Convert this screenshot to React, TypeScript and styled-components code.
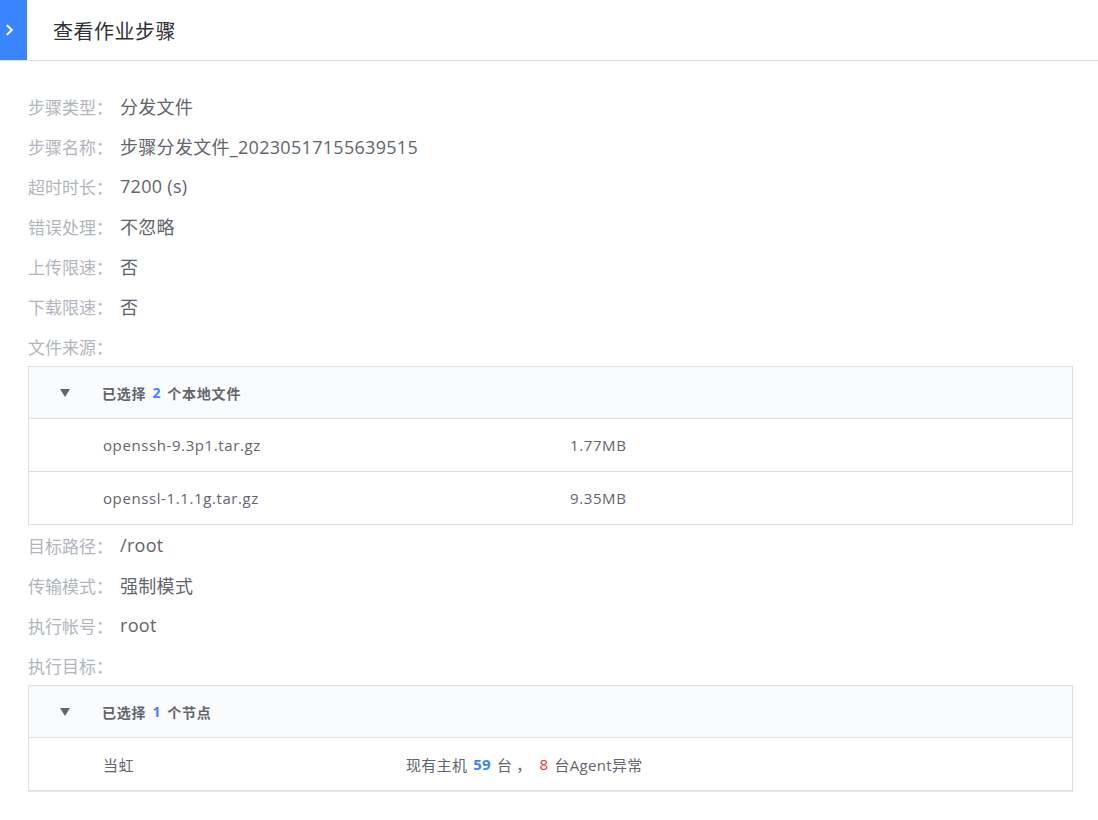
import React from "react";
import styled, { createGlobalStyle } from "styled-components";

const GlobalStyle = createGlobalStyle`
  html, body {
    margin: 0;
    padding: 0;
    background: #fff;
    font-family: "Open Sans", "Noto Sans CJK SC", sans-serif;
  }
`;

const Page = styled.div`
  width: 1098px;
  min-height: 820px;
  background: #fff;
`;

const Header = styled.header`
  display: flex;
  align-items: center;
  height: 60px;
  border-bottom: 1px solid #dcdee5;
`;

const ToggleTab = styled.div`
  display: flex;
  align-items: center;
  width: 27px;
  height: 60px;
  padding-left: 4px;
  box-sizing: border-box;
  background: #3a84ff;
`;

const Title = styled.h1`
  margin: 0 0 0 26px;
  font-size: 20px;
  font-weight: 400;
  color: #313238;
  letter-spacing: 0.5px;
`;

const Content = styled.main`
  padding: 25px 25px 0 28px;
`;

const Row = styled.div`
  display: flex;
  align-items: center;
  height: 40px;
`;

const Label = styled.span`
  font-size: 17px;
  color: #b2b5bd;
  width: 92px;
  flex-shrink: 0;
`;

const Value = styled.span`
  font-size: 18px;
  letter-spacing: 0.3px;
  color: #63656e;
`;

const Table = styled.div<{ $shadow?: boolean }>`
  border: 1px solid #dcdee5;
  box-shadow: ${({ $shadow }) => ($shadow ? "0 1px 0 #e6e7ec" : "none")};
`;

const TableHead = styled.div`
  display: flex;
  align-items: center;
  height: 51px;
  background: #fafbfd;
  border-bottom: 1px solid #dcdee5;
  font-size: 14px;
  letter-spacing: 0.8px;
  font-weight: 700;
  color: #63656e;
`;

const Caret = styled.span`
  width: 0;
  height: 0;
  margin: 0 32px 0 31px;
  border-left: 5px solid transparent;
  border-right: 5px solid transparent;
  border-top: 8px solid #63656e;
`;

const Num = styled.span<{ $red?: boolean }>`
  margin: 0 6px;
  font-weight: ${({ $red }) => ($red ? 400 : 700)};
  color: ${({ $red }) => ($red ? "#ea3636" : "#3a84ff")};
`;

const TableRow = styled.div<{ $valueCol: number }>`
  display: grid;
  grid-template-columns: ${({ $valueCol }) => `${$valueCol}px 1fr`};
  align-items: center;
  height: 52px;
  padding-left: 74px;
  font-size: 15px;
  letter-spacing: 0.6px;
  color: #63656e;

  & + & {
    border-top: 1px solid #dcdee5;
  }
`;

const Stat = styled.span`
  display: flex;
  align-items: center;
  letter-spacing: 0.3px;
`;

const Comma = styled.span`
  margin: 0 2px 0 4px;
`;

const Chevron = () => (
  <svg width="12" height="12" viewBox="0 0 12 12">
    <path
      d="M3.5 1.8 L7.8 6 L3.5 10.2"
      fill="none"
      stroke="#fff"
      strokeWidth="2"
      strokeLinecap="square"
    />
  </svg>
);

const fields: [string, string][] = [
  ["步骤类型：", "分发文件"],
  ["步骤名称：", "步骤分发文件_20230517155639515"],
  ["超时时长：", "7200 (s)"],
  ["错误处理：", "不忽略"],
  ["上传限速：", "否"],
  ["下载限速：", "否"],
];

const moreFields: [string, string][] = [
  ["目标路径：", "/root"],
  ["传输模式：", "强制模式"],
  ["执行帐号：", "root"],
];

const files = [
  { name: "openssh-9.3p1.tar.gz", size: "1.77MB" },
  { name: "openssl-1.1.1g.tar.gz", size: "9.35MB" },
];

const App = () => {
  return (
    <Page>
      <GlobalStyle />
      <Header>
        <ToggleTab>
          <Chevron />
        </ToggleTab>
        <Title>查看作业步骤</Title>
      </Header>
      <Content>
        {fields.map(([label, value]) => (
          <Row key={label}>
            <Label>{label}</Label>
            <Value>{value}</Value>
          </Row>
        ))}
        <Row>
          <Label>文件来源：</Label>
        </Row>
        <Table>
          <TableHead>
            <Caret />
            已选择<Num>2</Num>个本地文件
          </TableHead>
          {files.map((f) => (
            <TableRow key={f.name} $valueCol={467}>
              <span>{f.name}</span>
              <span>{f.size}</span>
            </TableRow>
          ))}
        </Table>
        {moreFields.map(([label, value]) => (
          <Row key={label}>
            <Label>{label}</Label>
            <Value>{value}</Value>
          </Row>
        ))}
        <Row>
          <Label>执行目标：</Label>
        </Row>
        <Table $shadow>
          <TableHead>
            <Caret />
            已选择<Num>1</Num>个节点
          </TableHead>
          <TableRow $valueCol={303}>
            <span>当虹</span>
            <Stat>
              现有主机<Num>59</Num>台<Comma>，</Comma>
              <Num $red>8</Num>台Agent异常
            </Stat>
          </TableRow>
        </Table>
      </Content>
    </Page>
  );
};

export default App;
